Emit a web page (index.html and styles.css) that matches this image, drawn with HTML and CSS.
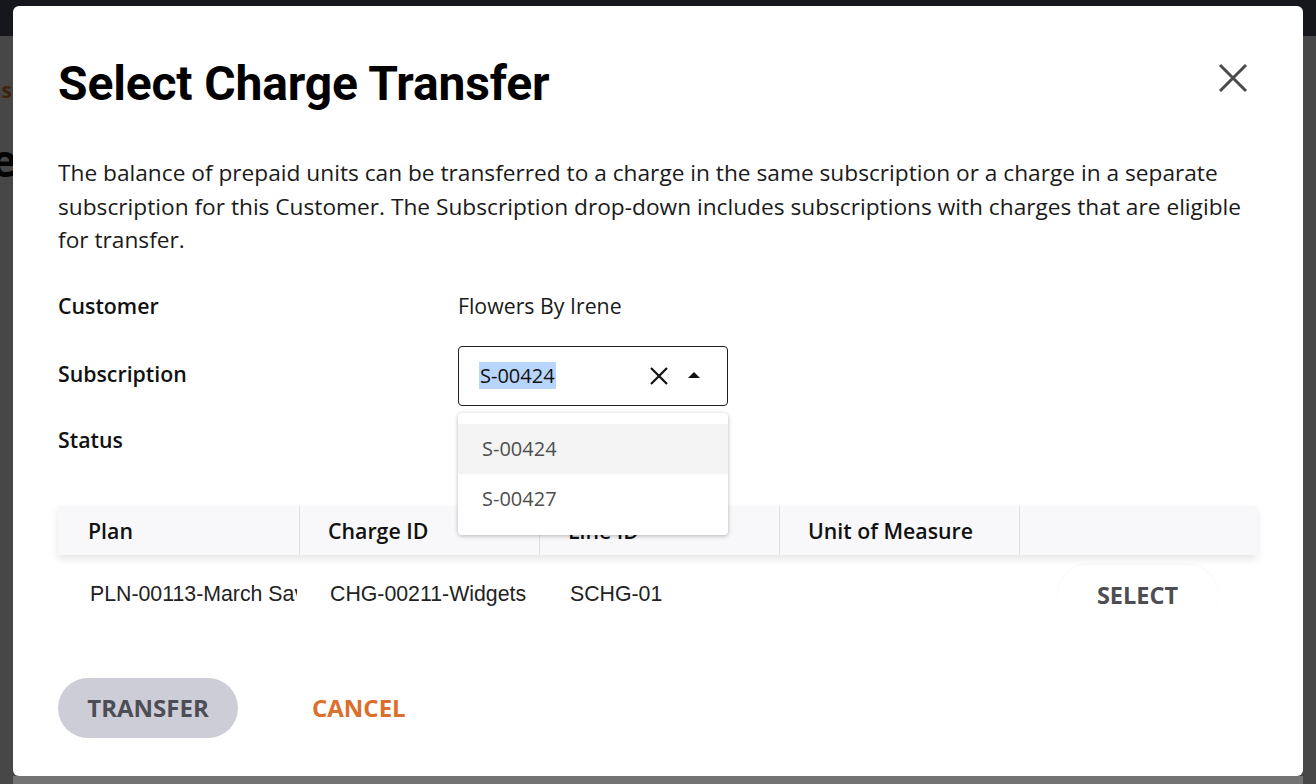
FILE: index.html
```html
<!DOCTYPE html>
<html lang="en">
<head>
<meta charset="utf-8">
<title>Select Charge Transfer</title>
<link rel="stylesheet" href="styles.css">
</head>
<body>
<div class="page">
  <header class="topbar"></header>
  <main class="page-main">
    <div class="crumb">Subscriptions</div>
    <h1 class="page-title">Charge</h1>
  </main>
</div>
<div class="backdrop"></div>
<div class="page-foot"></div>

<section class="modal" role="dialog" aria-labelledby="dlg-title">
  <div class="modal-head">
    <h2 id="dlg-title" class="modal-title">Select Charge Transfer</h2>
    <button class="close-btn" aria-label="Close">
      <svg width="30" height="30" viewBox="0 0 30 30"><path d="M2 2 L28 28 M28 2 L2 28" stroke="#4a4a4a" stroke-width="3" fill="none"/></svg>
    </button>
  </div>

  <p class="desc">The balance of prepaid units can be transferred to a charge in the same subscription or a charge in a separate subscription for this Customer. The Subscription drop-down includes subscriptions with charges that are eligible for transfer.</p>

  <div class="fields">
    <div class="field row-customer">
      <div class="label">Customer</div>
      <div class="value">Flowers By Irene</div>
    </div>
    <div class="field row-sub">
      <div class="label sub-label">Subscription</div>
      <div class="value">
        <div class="combo">
          <div class="combo-box">
            <span class="combo-text"><span class="sel">S-00424</span></span>
            <svg class="combo-clear" width="20" height="20" viewBox="0 0 20 20"><path d="M2 2 L18 18 M18 2 L2 18" stroke="#111" stroke-width="2.2" fill="none"/></svg>
            <svg class="combo-caret" width="14" height="8" viewBox="0 0 14 8"><path d="M7 1 L13 7 L1 7 Z" fill="#111"/></svg>
          </div>
          <ul class="combo-list">
            <li class="opt active">S-00424</li>
            <li class="opt">S-00427</li>
          </ul>
        </div>
      </div>
    </div>
    <div class="field row-status">
      <div class="label">Status</div>
      <div class="value"></div>
    </div>
  </div>

  <div class="table">
    <div class="thead">
      <div class="th">Plan</div>
      <div class="th">Charge ID</div>
      <div class="th">Line ID</div>
      <div class="th">Unit of Measure</div>
      <div class="th"></div>
    </div>
    <div class="tr">
      <div class="td plan">PLN-00113-March Savings Plan</div>
      <div class="td">CHG-00211-Widgets</div>
      <div class="td">SCHG-01</div>
      <div class="td"></div>
      <div class="td act"><button class="select-btn">SELECT</button></div>
    </div>
  </div>

  <div class="actions">
    <button class="btn-transfer">TRANSFER</button>
    <button class="btn-cancel">CANCEL</button>
  </div>
</section>
</body>
</html>
```

FILE: styles.css
```css
* { box-sizing: border-box; }
html, body { margin: 0; padding: 0; }
body {
  width: 1316px;
  height: 784px;
  overflow: hidden;
  font-family: "Open Sans", "Noto Sans", sans-serif;
  background: #fff;
}

.page { display: flex; flex-direction: column; height: 784px; }
.topbar { height: 36px; background: #4b5466; flex: none; }
.page-main { flex: 1; background: #fff; }
.crumb {
  margin: 40px 0 0 -130px;
  font-size: 21px;
  line-height: 28px;
  font-weight: 700;
  color: #e07a2f;
}
.page-title {
  margin: 30px 0 0 -137px;
  font-size: 44px;
  line-height: 52px;
  font-weight: 700;
  color: #111;
}

.backdrop {
  position: fixed;
  inset: 0;
  background: rgba(0, 0, 0, 0.72);
}
.page-foot {
  position: fixed;
  left: 13px;
  right: 13px;
  bottom: 0;
  height: 8px;
  background: #737373;
}

.modal {
  position: fixed;
  left: 13px;
  top: 6px;
  width: 1290px;
  height: 770px;
  background: #fff;
  border-radius: 6px;
  padding: 50px 46px 0 45px;
  color: #1a1a1a;
}

.modal-head {
  display: flex;
  justify-content: space-between;
  align-items: flex-start;
}
.modal-title {
  margin: 0;
  font-family: Roboto, "Liberation Sans", sans-serif;
  font-weight: 700;
  font-size: 48px;
  line-height: 56px;
  color: #000;
  letter-spacing: -0.15px;
}
.close-btn {
  margin: 7px 9px 0 0;
  padding: 0;
  border: 0;
  background: none;
  width: 30px;
  height: 30px;
  display: flex;
}

.desc {
  margin: 44px 0 0 0;
  font-size: 22.7px;
  line-height: 33.5px;
  color: #1a1a1a;
}

.fields { margin-top: 32px; display: flex; flex-direction: column; }
.field { display: flex; align-items: center; }
.label {
  width: 400px;
  font-size: 21.3px;
  font-weight: 600;
  line-height: 34px;
  color: #111;
}
.sub-label { margin-top: -4px; }
.value { font-size: 21.3px; line-height: 34px; color: #1a1a1a; }
.row-customer { margin-bottom: 23px; }
.row-sub { margin-bottom: 17px; }

.combo { position: relative; width: 270px; }
.combo-box {
  height: 60px;
  border: 1px solid #1f1f1f;
  border-radius: 4px;
  display: flex;
  align-items: center;
  padding: 0 26px 0 20px;
}
.combo-text { flex: 1; font-size: 20px; line-height: 28px; color: #111; }
.sel { background: #b8d5fb; padding: 0 1px; }
.combo-clear { margin-right: 18px; }
.combo-caret { margin-top: -2px; }

.combo-list {
  position: absolute;
  left: 0;
  top: 67px;
  width: 270px;
  margin: 0;
  padding: 11px 0;
  list-style: none;
  background: #fff;
  border-radius: 4px;
  box-shadow: 0 1px 4px rgba(0, 0, 0, 0.28);
  z-index: 5;
}
.opt {
  height: 50px;
  line-height: 50px;
  padding-left: 24px;
  font-size: 20px;
  color: #4e4e4e;
}
.opt.active { background: #f4f4f4; }

.table { margin-top: 49px; width: 1199px; }
.thead {
  display: grid;
  grid-template-columns: 242px 240px 240px 240px 237px;
  height: 49px;
  background: #f8f8fa;
  box-shadow: 0 4px 8px rgba(0, 0, 0, 0.10);
  position: relative;
}
.th {
  font-size: 21.3px;
  font-weight: 600;
  color: #111;
  line-height: 49px;
  padding-left: 28px;
  border-right: 1px solid #dedee3;
}
.th:first-child { padding-left: 30px; }
.th:last-child { border-right: 0; }

.tr {
  display: grid;
  grid-template-columns: 242px 240px 240px 240px 237px;
  height: 80px;
  align-items: center;
}
.td {
  font-family: "Liberation Sans", Arial, sans-serif;
  font-size: 21.3px;
  color: #222;
  padding-left: 30px;
  white-space: nowrap;
  overflow: hidden;
}
.td.plan { padding-left: 32px; margin-right: 3px; }
.td.act { padding-left: 0; display: flex; justify-content: center; overflow: visible; }
.select-btn {
  width: 160px;
  height: 60px;
  margin-left: -2px;
  border: 0;
  border-radius: 30px;
  background: #fff;
  box-shadow: 0 -1px 3px rgba(0, 0, 0, 0.035);
  font-family: "Open Sans", "Noto Sans", sans-serif;
  font-size: 23.5px;
  font-weight: 700;
  color: #4d4d52;
  padding: 0;
}

.actions { margin-top: 43px; display: flex; align-items: center; gap: 44px; }
.btn-transfer {
  width: 180px;
  height: 60px;
  border: 0;
  border-radius: 30px;
  background: #cdcdd8;
  font-family: "Open Sans", "Noto Sans", sans-serif;
  font-size: 24px;
  font-weight: 700;
  color: #4d4e55;
  padding: 0;
}
.btn-cancel {
  height: 60px;
  border: 0;
  background: none;
  padding: 0 30px;
  font-family: "Open Sans", "Noto Sans", sans-serif;
  font-size: 24px;
  font-weight: 700;
  color: #da702c;
}
```
